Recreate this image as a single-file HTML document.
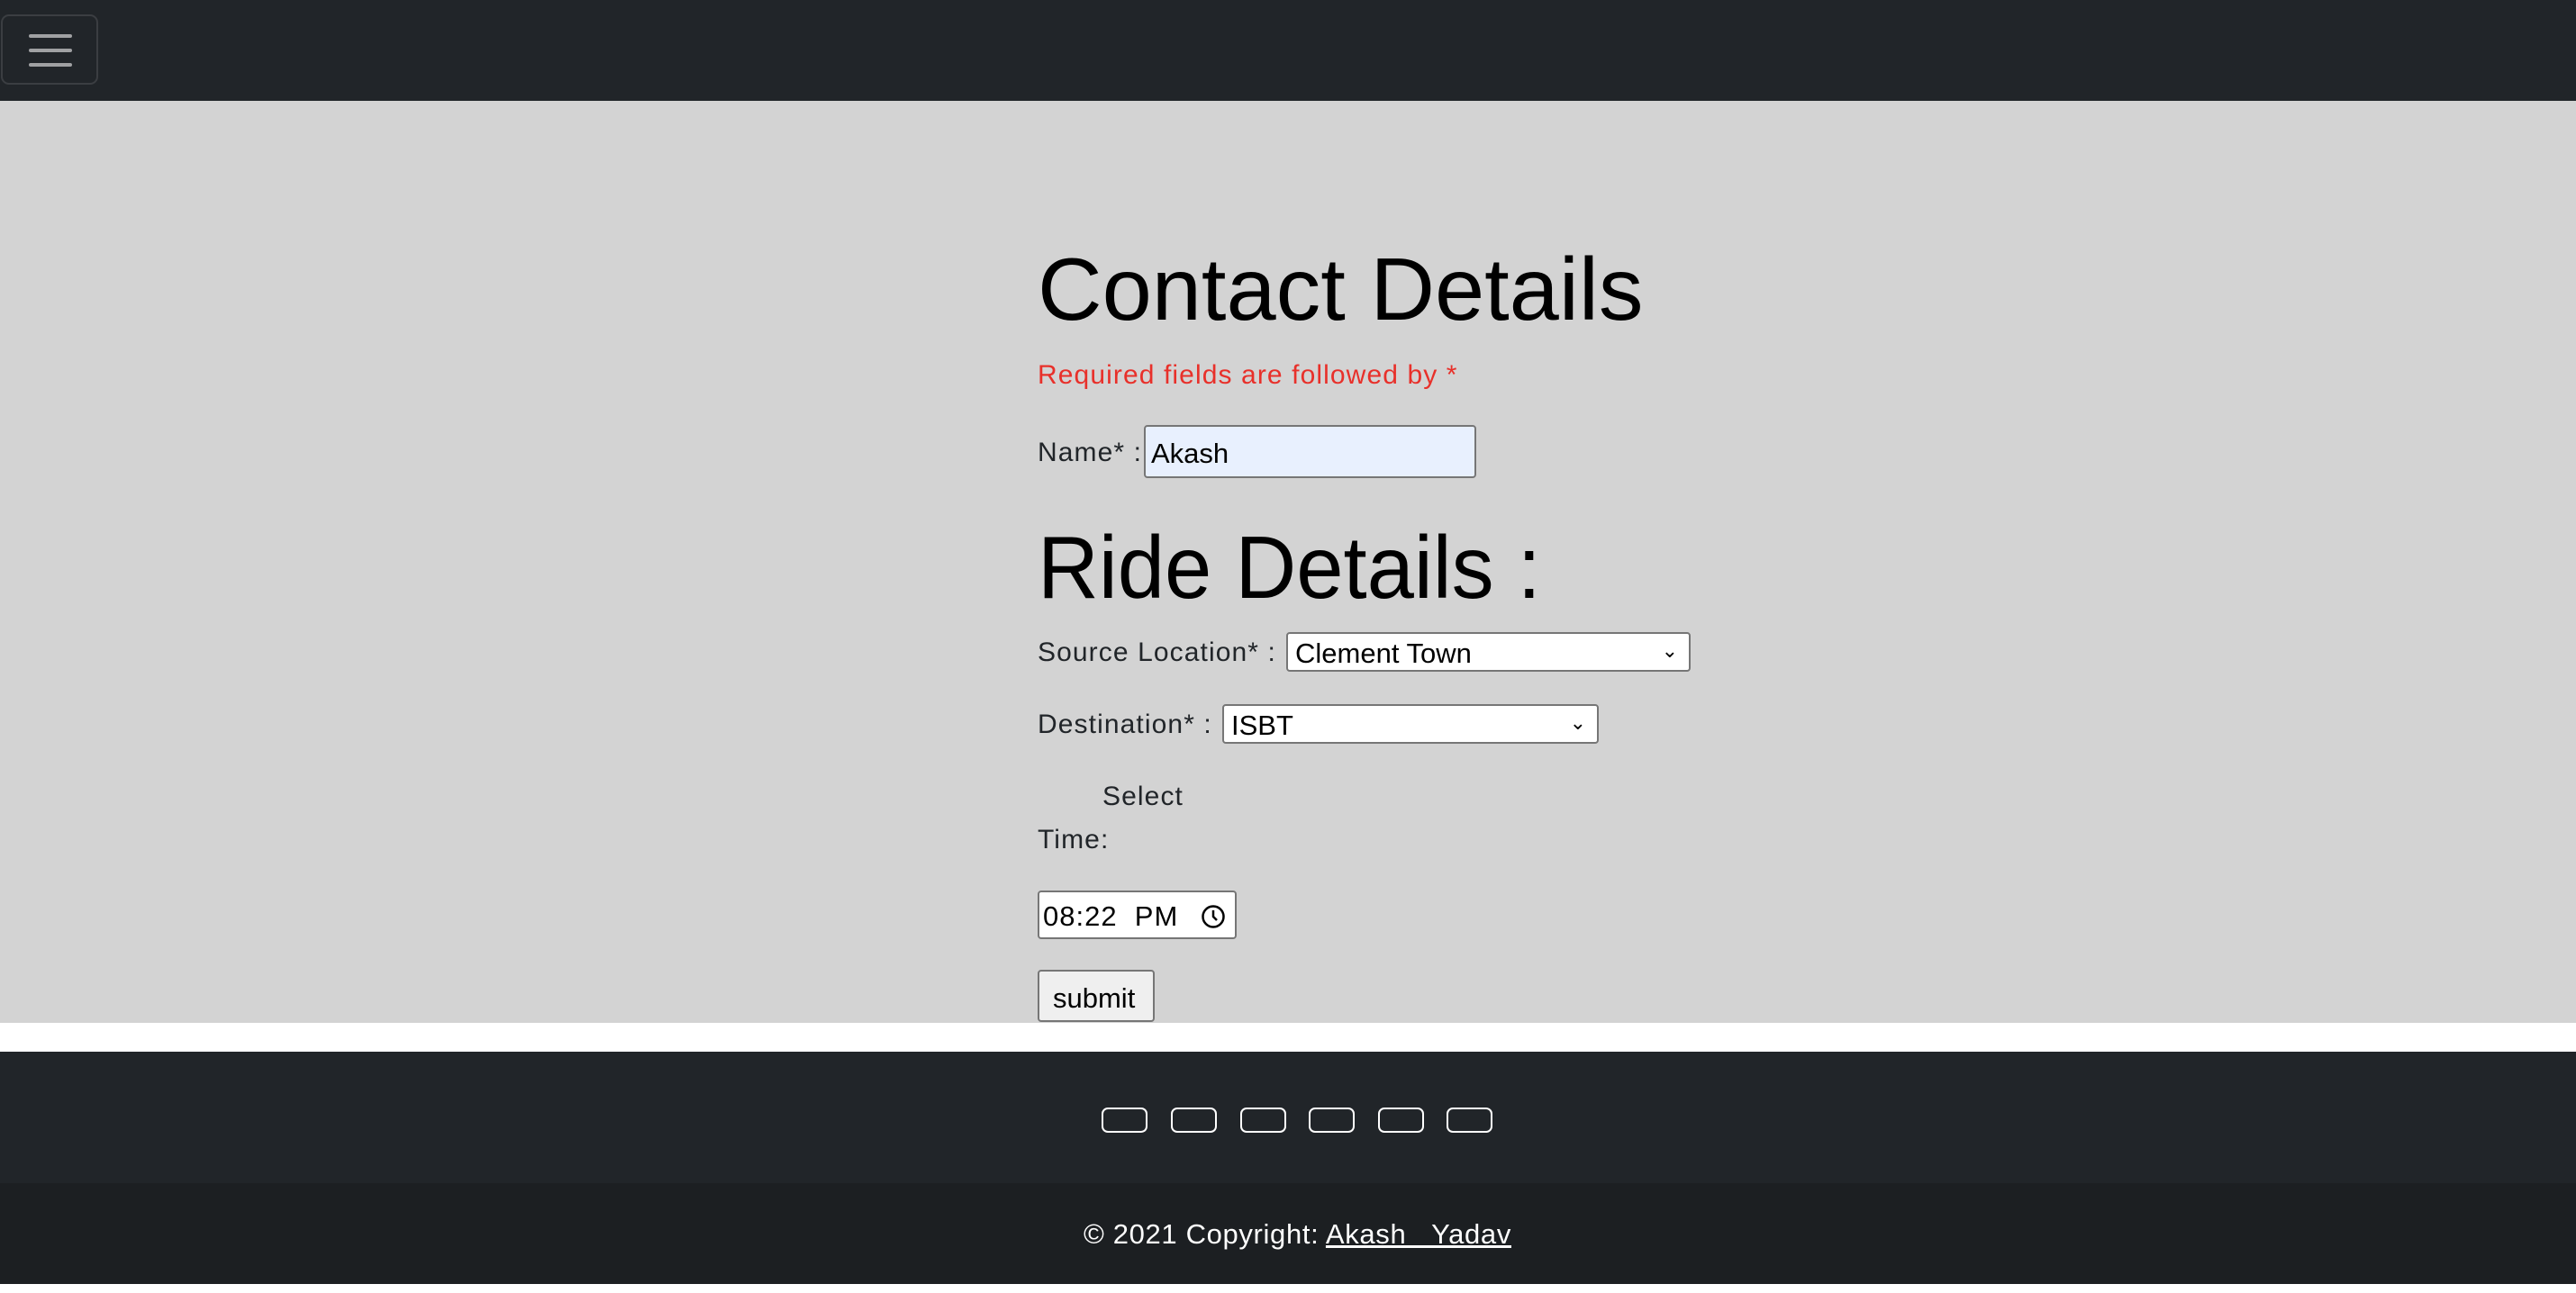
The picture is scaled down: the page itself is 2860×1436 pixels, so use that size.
<!DOCTYPE html>
<html><head><meta charset="utf-8"><style>
html,body{margin:0;padding:0;width:2860px;height:1436px;background:#fff;font-family:"Liberation Sans",sans-serif;overflow:hidden;position:relative}
.a{position:absolute;white-space:nowrap}
.lbl{font-size:30px;color:#212529;line-height:1;letter-spacing:1.1px}
.box{position:absolute;box-sizing:border-box;border:2px solid #767676;border-radius:4px;background:#fff;font-size:31px;color:#000;line-height:1}
</style></head><body>
<div class="a" style="left:0;top:0;width:2860px;height:112px;background:#212529"></div>
<div class="a" style="left:1px;top:16px;width:108px;height:78px;border:2px solid #3b3e42;border-radius:9px;box-sizing:border-box"></div>
<div class="a" style="left:32px;top:38px;width:48px;height:4px;background:#a0a1a3;border-radius:2px"></div>
<div class="a" style="left:32px;top:54px;width:48px;height:4px;background:#a0a1a3;border-radius:2px"></div>
<div class="a" style="left:32px;top:70px;width:48px;height:4px;background:#a0a1a3;border-radius:2px"></div>
<div class="a" style="left:0;top:112px;width:2860px;height:1024px;background:#d3d3d3"></div>

<div class="a" style="left:1152px;top:272px;font-size:98px;line-height:1;color:#000;transform:scaleX(1.012);transform-origin:0 0">Contact Details</div>
<div class="a" style="left:1152px;top:402px;font-size:30px;line-height:1;color:#e8302a;letter-spacing:1.1px">Required fields are followed by *</div>
<div class="a lbl" style="left:1152px;top:488px">Name* :</div>
<div class="box" style="left:1270px;top:472px;width:369px;height:59px;background:#e8f0fe;padding:14px 0 0 6px">Akash</div>

<div class="a" style="left:1152px;top:581px;font-size:98px;line-height:1;color:#000;transform:scaleX(0.959);transform-origin:0 0">Ride Details :</div>
<div class="a lbl" style="left:1152px;top:710px">Source Location* :</div>
<div class="box" style="left:1428px;top:702px;width:449px;height:44px;padding:6px 0 0 8px">Clement Town<span class="a" style="right:12px;top:8px;font-size:22px">&#8964;</span></div>
<div class="a lbl" style="left:1152px;top:790px">Destination* :</div>
<div class="box" style="left:1357px;top:782px;width:418px;height:44px;padding:6px 0 0 8px">ISBT<span class="a" style="right:12px;top:8px;font-size:22px">&#8964;</span></div>
<div class="a lbl" style="left:1224px;top:870px">Select</div>
<div class="a lbl" style="left:1152px;top:918px">Time:</div>
<div class="box" style="left:1152px;top:989px;width:221px;height:54px;padding:11px 0 0 4px;letter-spacing:1px">08:22&nbsp;&nbsp;PM
<svg class="a" style="left:179px;top:13px" width="28" height="28" viewBox="0 0 28 28"><circle cx="14" cy="14" r="11.5" fill="none" stroke="#000" stroke-width="2.5"/><path d="M14 7v7l4 4" fill="none" stroke="#000" stroke-width="2.5"/></svg></div>
<div class="box" style="left:1152px;top:1077px;width:130px;height:58px;background:#efefef;padding:14px 0 0 15px">submit</div>

<div class="a" style="left:0;top:1168px;width:2860px;height:146px;background:#212529"></div>
<div class="a" style="left:1223px;top:1230px;width:51px;height:28px;border:2px solid #fff;border-radius:7px;box-sizing:border-box"></div>
<div class="a" style="left:1300px;top:1230px;width:51px;height:28px;border:2px solid #fff;border-radius:7px;box-sizing:border-box"></div>
<div class="a" style="left:1377px;top:1230px;width:51px;height:28px;border:2px solid #fff;border-radius:7px;box-sizing:border-box"></div>
<div class="a" style="left:1453px;top:1230px;width:51px;height:28px;border:2px solid #fff;border-radius:7px;box-sizing:border-box"></div>
<div class="a" style="left:1530px;top:1230px;width:51px;height:28px;border:2px solid #fff;border-radius:7px;box-sizing:border-box"></div>
<div class="a" style="left:1606px;top:1230px;width:51px;height:28px;border:2px solid #fff;border-radius:7px;box-sizing:border-box"></div>
<div class="a" style="left:0;top:1314px;width:2860px;height:112px;background:#1c1f22"></div>
<div class="a" style="left:1203px;top:1355px;font-size:31px;line-height:1;color:#fff;letter-spacing:0.65px">© 2021 Copyright: <u>Akash&nbsp;&nbsp;&nbsp;Yadav</u></div>
</body></html>
